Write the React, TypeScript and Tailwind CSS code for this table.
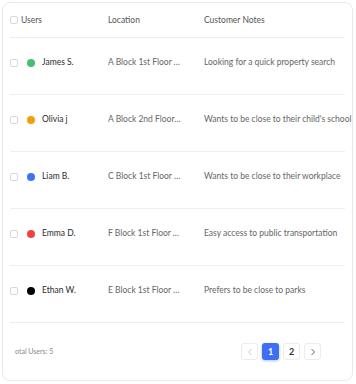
import React from "react";

const rows = [
  { name: "James S.", color: "#44c06f", loc: "A Block 1st Floor A12", note: "Looking for a quick property search" },
  { name: "Olivia j", color: "#f59e0b", loc: "A Block 2nd Floor B4", note: "Wants to be close to their child's school" },
  { name: "Liam B.", color: "#3b74f6", loc: "C Block 1st Floor C2", note: "Wants to be close to their workplace" },
  { name: "Emma D.", color: "#f04444", loc: "F Block 1st Floor A7", note: "Easy access to public transportation" },
  { name: "Ethan W.", color: "#000000", loc: "E Block 1st Floor A9", note: "Prefers to be close to parks" },
];

function Box() {
  return <span className="block w-[8px] h-[8px] rounded-[2px] border border-[#d6d9de] bg-white shrink-0" />;
}

export default function App() {
  return (
    <div className="w-[356px] h-[384px] bg-white p-[2px]" style={{ fontFamily: "Lato, 'Open Sans', sans-serif" }}>
      <div className="h-[379px] w-[351px] border border-[#e8eaee] rounded-[8px] px-[7px] flex flex-col">
        <div className="h-[35px] flex items-center border-b border-[#eceef3] text-[8.5px] text-[#555]">
          <div className="w-[98px] shrink-0 flex items-center gap-[3px]">
            <Box />
            <span>Users</span>
          </div>
          <div className="w-[96px] shrink-0">Location</div>
          <div className="flex-1 whitespace-nowrap">Customer Notes</div>
        </div>
        {rows.map((r) => (
          <div key={r.name} className="h-[57px] flex items-center pb-[7px] border-b border-[#eceef3] text-[8.5px]">
            <div className="w-[98px] shrink-0 flex items-center">
              <Box />
              <span className="ml-[9px] w-[8px] h-[8px] rounded-full shrink-0" style={{ background: r.color }} />
              <span className="ml-[7px] text-[#2a2a2a]">{r.name}</span>
            </div>
            <div className="w-[74px] shrink-0 truncate text-[#666] mr-[22px]">{r.loc}</div>
            <div className="shrink-0 whitespace-nowrap text-[#666]">{r.note}</div>
          </div>
        ))}
        <div className="flex-1 flex items-center justify-between pl-[5px] pr-[24px]">
          <span className="text-[7px] text-[#888]">otal Users: 5</span>
          <div className="flex items-center gap-[4px]">
            <button className="w-[17px] h-[17px] rounded-[3px] border border-[#eaecef] bg-white flex items-center justify-center text-[#c8ccd2]">
              <svg width="6" height="8" viewBox="0 0 6 8" fill="none" stroke="currentColor" strokeWidth="1"><path d="M4.5 1 L1.5 4 L4.5 7" /></svg>
            </button>
            <button className="w-[17px] h-[17px] rounded-[3px] bg-[#3d6ef5] text-white text-[9px] font-bold flex items-center justify-center shadow-[0_1px_3px_rgba(61,110,245,0.4)]">1</button>
            <button className="w-[17px] h-[17px] rounded-[3px] border border-[#eaecef] bg-white text-[#333] text-[9px] font-bold flex items-center justify-center">2</button>
            <button className="w-[17px] h-[17px] rounded-[3px] border border-[#eaecef] bg-white flex items-center justify-center text-[#666]">
              <svg width="6" height="8" viewBox="0 0 6 8" fill="none" stroke="currentColor" strokeWidth="1"><path d="M1.5 1 L4.5 4 L1.5 7" /></svg>
            </button>
          </div>
        </div>
      </div>
    </div>
  );
}
